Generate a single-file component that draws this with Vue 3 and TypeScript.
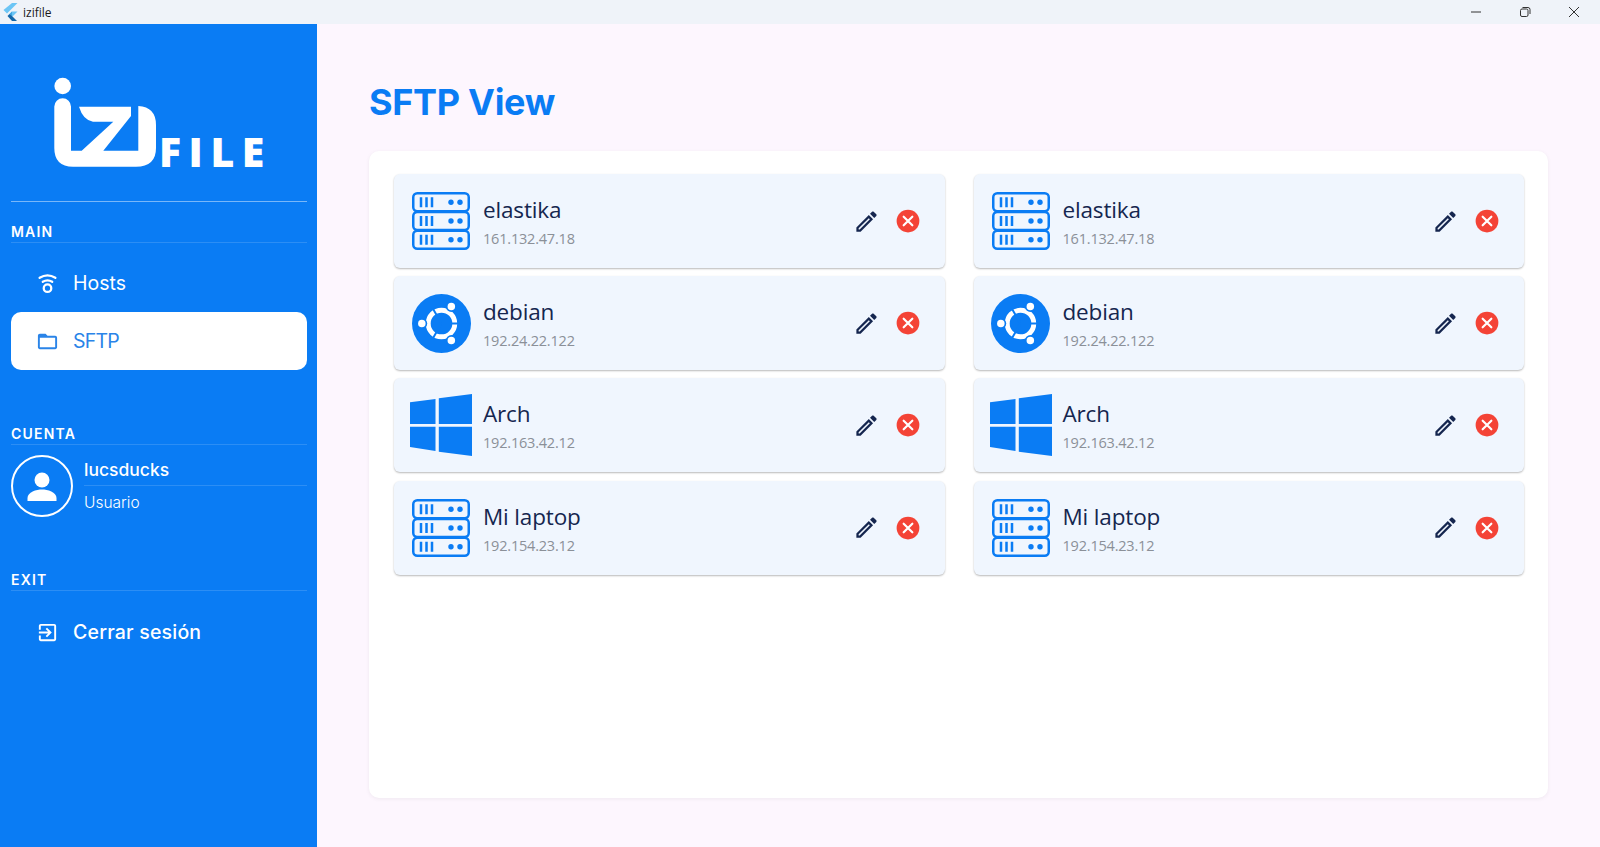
<script setup lang="ts">
interface Host {
  name: string
  ip: string
  os: 'server' | 'ubuntu' | 'windows'
}

const base: Host[] = [
  { name: 'elastika', ip: '161.132.47.18', os: 'server' },
  { name: 'debian', ip: '192.24.22.122', os: 'ubuntu' },
  { name: 'Arch', ip: '192.163.42.12', os: 'windows' },
  { name: 'Mi laptop', ip: '192.154.23.12', os: 'server' },
]
const hosts: Host[] = base.flatMap((h) => [h, h])
</script>

<template>
  <div class="window">
    <header class="titlebar">
      <svg class="flutter" viewBox="0 0 15 18" width="15" height="18">
        <path d="M9 0h5.500L4 10.500 .5 7z" fill="#6cc5f5" />
        <path d="M9 8.500h5.500l-5 5-3-2.500z" fill="#6cc5f5" />
        <path d="M6.500 11L9 8.500v5z" fill="#3fa5e0" />
        <path d="M6.500 11L9.500 13.500 14 18H9l-4.500-5z" fill="#1467a8" />
      </svg>
      <span class="app-name">izifile</span>
      <div class="controls">
        <svg viewBox="0 0 12 12" width="12" height="12"><path d="M1 6h10" /></svg>
        <svg viewBox="0 0 12 12" width="12" height="12">
          <rect x="1.500" y="3" width="7.500" height="7.500" rx="1.500" />
          <path d="M3.500 1.500h5.500a2 2 0 0 1 2 2V8" />
        </svg>
        <svg viewBox="0 0 12 12" width="12" height="12"><path d="M1 1l10 10M11 1L1 11" /></svg>
      </div>
    </header>

    <div class="body">
      <aside class="sidebar">
        <div class="brand">
          <svg class="logo" viewBox="54 77 103 90" width="103" height="90">
            <circle cx="62.700" cy="86" r="8.300" fill="#fff" />
            <path
              fill="#fff"
              d="M54.300 106.600a8.350 8.350 0 0 1 16.700 0V150.700H81.700L113.300 121.700H93Q83 120 79 106.700H131V116L103.300 150.700H138.300V106Q156 107 156 125V148Q156 166.700 136 166.700H73Q54.300 166.700 54.300 148Z"
            />
          </svg>
          <span class="file">FILE</span>
        </div>

        <h2 class="section first">MAIN</h2>
        <nav class="nav">
          <a class="item">
            <svg viewBox="0 0 22 22" width="23" height="23" fill="none" stroke="currentColor" stroke-width="2.200" stroke-linecap="round">
              <path d="M3.500 5.600Q11 1 18.500 5.600" />
              <path d="M6.500 9.400Q11 6.600 15.500 9.400" />
              <circle cx="11" cy="15.500" r="3.600" />
            </svg>
            <span>Hosts</span>
          </a>
          <a class="item active">
            <svg viewBox="0 0 24 24" width="23" height="23" fill="currentColor">
              <path d="M20 6h-8l-2-2H4c-1.100 0-2 .9-2 2v12c0 1.100.9 2 2 2h16c1.100 0 2-.9 2-2V8c0-1.100-.9-2-2-2zm0 12H4V8h16v10z" />
            </svg>
            <span>SFTP</span>
          </a>
        </nav>

        <h2 class="section account">CUENTA</h2>
        <div class="user">
          <div class="avatar">
            <svg viewBox="0 0 58 58" width="58" height="58" fill="#fff">
              <circle cx="29" cy="23" r="7.500" />
              <path d="M14.500 44v-3c0-6 9-8.500 14.500-8.500S43.500 35 43.500 41v3z" />
            </svg>
          </div>
          <div class="user-text">
            <div class="user-name">lucsducks</div>
            <div class="user-role">Usuario</div>
          </div>
        </div>

        <h2 class="section exit">EXIT</h2>
        <nav class="nav nav-exit">
          <a class="item logout">
            <svg viewBox="0 0 24 24" width="23" height="23" fill="currentColor">
              <path d="M10.090 15.590L11.500 17l5-5-5-5-1.410 1.410L12.670 11H3v2h9.670l-2.580 2.590zM19 3H5c-1.110 0-2 .9-2 2v4h2V5h14v14H5v-4H3v4c0 1.100.89 2 2 2h14c1.100 0 2-.9 2-2V5c0-1.110-.9-2-2-2z" />
            </svg>
            <span>Cerrar sesión</span>
          </a>
        </nav>
      </aside>

      <main class="main">
        <h1 class="title">SFTP View</h1>
        <section class="panel">
          <article v-for="(h, i) in hosts" :key="i" class="card">
            <div class="os">
              <svg v-if="h.os === 'server'" viewBox="0 0 58 58" width="58" height="58">
                <g v-for="(top, r) in [1.250, 20, 38.750]" :key="r">
                  <rect x="1.250" :y="top" width="55.500" height="18" rx="4" fill="none" stroke="#0a7cf4" stroke-width="2.500" />
                  <path :d="`M9 ${top + 4}v10M14.500 ${top + 4}v10M20 ${top + 4}v10`" stroke="#0a7cf4" stroke-width="2.500" />
                  <circle cx="39" :cy="top + 9" r="2.700" fill="#0a7cf4" />
                  <circle cx="48" :cy="top + 9" r="2.700" fill="#0a7cf4" />
                </g>
              </svg>
              <svg v-else-if="h.os === 'ubuntu'" viewBox="0 0 60 60" width="59" height="59">
                <circle cx="30" cy="30" r="30" fill="#0a7cf4" />
                <circle cx="30" cy="30" r="13.500" fill="none" stroke="#fff" stroke-width="5" />
                <path d="M30 30L48 30M30 30L21 45.600M30 30L21 14.400" stroke="#0a7cf4" stroke-width="2" />
                <circle cx="10" cy="30" r="5.500" fill="#0a7cf4" />
                <circle cx="40" cy="12.700" r="5.500" fill="#0a7cf4" />
                <circle cx="40" cy="47.300" r="5.500" fill="#0a7cf4" />
                <circle cx="10" cy="30" r="3.800" fill="#fff" />
                <circle cx="40" cy="12.700" r="3.800" fill="#fff" />
                <circle cx="40" cy="47.300" r="3.800" fill="#fff" />
              </svg>
              <svg v-else viewBox="0 0 62 62" width="62" height="62" fill="#0a7cf4">
                <path d="M0 8.300L25.500 5V30H0z" />
                <path d="M28.800 4.300L62 0V30H28.800z" />
                <path d="M0 32.700H25.500V57L0 53z" />
                <path d="M28.800 32.700H62V62L28.800 57.700z" />
              </svg>
            </div>
            <div class="info">
              <div class="name">{{ h.name }}</div>
              <div class="ip">{{ h.ip }}</div>
            </div>
            <div class="actions">
              <svg viewBox="0 0 24 24" width="27" height="27" fill="#15264f">
                <path d="M14.060 9.020l.92.92L5.920 19H5v-.92l9.060-9.060M17.660 3c-.25 0-.51.1-.7.29l-1.830 1.830 3.750 3.750 1.830-1.830c.39-.39.39-1.020 0-1.410l-2.340-2.340c-.2-.2-.45-.29-.71-.29zm-3.600 3.190L3 17.250V21h3.750L17.810 9.940l-3.750-3.750z" />
              </svg>
              <svg viewBox="0 0 24 24" width="26" height="26">
                <circle cx="12" cy="12" r="10.500" fill="#f44336" />
                <path d="M8 8l8 8M16 8l-8 8" stroke="#fff" stroke-width="2" stroke-linecap="round" />
              </svg>
            </div>
          </article>
        </section>
      </main>
    </div>
  </div>
</template>

<style>
html,
body {
  margin: 0;
  overflow: hidden;
}
</style>

<style scoped>
.window {
  height: 847px;
  display: flex;
  flex-direction: column;
  font-family: Inter, "Open Sans", sans-serif;
  background: #fdf6fe;
}
.titlebar {
  height: 24px;
  flex: none;
  background: #eff3f9;
  display: flex;
  align-items: center;
  padding-left: 3px;
}
.app-name {
  margin-left: 5px;
  font: 12px "Open Sans", sans-serif;
  color: #1a1a1a;
}
.controls {
  margin-left: auto;
  display: flex;
  gap: 37px;
  padding-right: 20px;
}
.controls svg {
  fill: none;
  stroke: #333;
  stroke-width: 1;
}
.body {
  flex: 1;
  display: flex;
  min-height: 0;
}
.sidebar {
  width: 317px;
  flex: none;
  box-sizing: border-box;
  padding: 0 10px 0 11px;
  background: #0a7cf4;
  color: #fff;
}
.brand {
  box-sizing: border-box;
  height: 178px;
  padding: 53px 0 0 43px;
  border-bottom: 1.500px solid rgba(255, 255, 255, 0.45);
  display: flex;
  align-items: flex-start;
}
.logo {
  display: block;
  flex: none;
}
.file {
  margin: 51px 0 0 2px;
  font: 800 41px/46px "Open Sans", sans-serif;
  letter-spacing: 7.500px;
  color: #fff;
}
.section {
  margin: 0;
  height: 19px;
  font-size: 14px;
  line-height: 18px;
  font-weight: 600;
  letter-spacing: 1.200px;
  border-bottom: 1px solid rgba(255, 255, 255, 0.14);
}
.section.first {
  margin-top: 21px;
}
.section.account {
  margin-top: 55px;
}
.section.exit {
  margin-top: 53px;
}
.nav {
  margin-top: 11px;
  display: flex;
  flex-direction: column;
}
.nav-exit {
  margin-top: 12px;
}
.item {
  height: 58px;
  display: flex;
  align-items: center;
  gap: 14px;
  padding-left: 25px;
  border-radius: 10px;
  font-size: 19.500px;
  color: #fff;
}
.item.active {
  background: #fff;
  color: #2a84e8;
  letter-spacing: -0.800px;
}
.item.logout {
  font-weight: 500;
  letter-spacing: 0.200px;
}
.user {
  margin-top: 10px;
  display: flex;
  gap: 11px;
}
.avatar {
  width: 62px;
  height: 62px;
  box-sizing: border-box;
  border: 2.500px solid #fff;
  border-radius: 50%;
  flex: none;
  display: flex;
  align-items: center;
  justify-content: center;
}
.user-text {
  flex: 1;
}
.user-name {
  height: 30px;
  line-height: 30px;
  font-size: 17.500px;
  font-weight: 500;
  border-bottom: 1px solid rgba(255, 255, 255, 0.14);
}
.user-role {
  margin-top: 2px;
  line-height: 30px;
  font-size: 15.500px;
  font-weight: 300;
}
.main {
  flex: 1;
  box-sizing: border-box;
  padding: 0 52px 49px 52px;
  display: flex;
  flex-direction: column;
  min-width: 0;
}
.title {
  height: 127px;
  flex: none;
  box-sizing: border-box;
  margin: 0;
  padding-top: 54px;
  font-size: 36px;
  line-height: 48px;
  font-weight: 700;
  letter-spacing: -0.300px;
  color: #0a7cf4;
}
.panel {
  flex: 1;
  background: #fff;
  border-radius: 10px;
  box-shadow: 0 1px 4px rgba(0, 0, 0, 0.06);
  box-sizing: border-box;
  padding: 23px 24px 0 25px;
  display: grid;
  grid-template-columns: 1fr 1fr;
  grid-auto-rows: 94px;
  align-content: start;
  column-gap: 29px;
  row-gap: 8.200px;
}
.card {
  display: flex;
  align-items: center;
  background: #f0f6fe;
  border-radius: 6px;
  box-shadow: 0 1px 2px rgba(0, 0, 0, 0.28);
  padding: 0 24px 0 16px;
}
.os {
  width: 62px;
  height: 62px;
  flex: none;
  display: flex;
  align-items: center;
  justify-content: center;
}
.info {
  margin-left: 11px;
  padding-top: 2px;
  font-family: "Open Sans", sans-serif;
}
.name {
  font-size: 22.500px;
  line-height: 30px;
  letter-spacing: -0.150px;
  color: #15264f;
}
.ip {
  margin-top: 4px;
  font-size: 14.500px;
  line-height: 20px;
  letter-spacing: -0.200px;
  color: #8b9098;
}
.actions {
  margin-left: auto;
  display: flex;
  align-items: center;
  gap: 15px;
}
</style>
